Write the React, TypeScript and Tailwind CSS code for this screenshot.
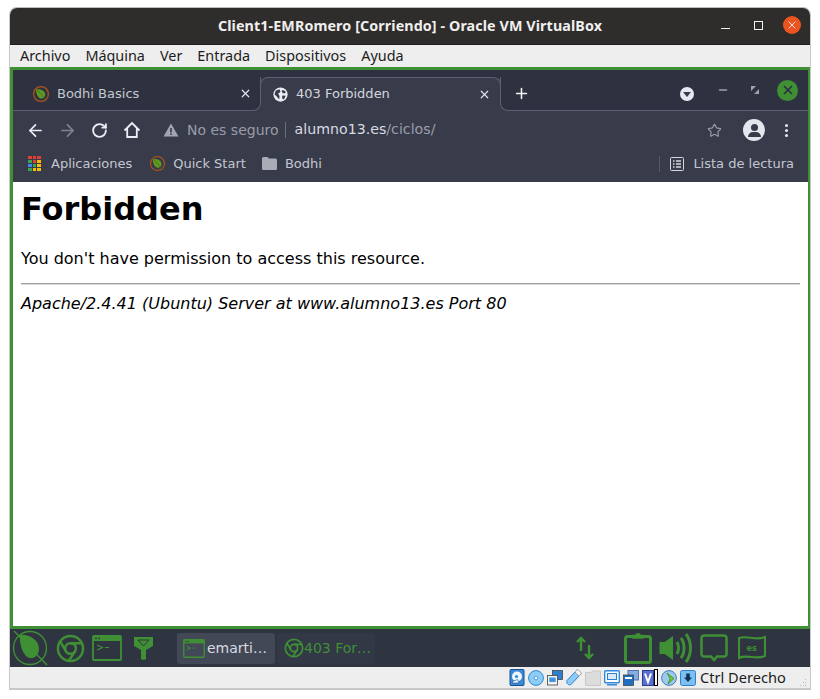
import React from "react";
import { ArrowLeft, ArrowRight, RotateCw, X, Plus, Star, Minus } from "lucide-react";

const G = "#3f8f35";
const UI = "font-['DejaVu_Sans',sans-serif]";

function Leaf({ size = 18 }: { size?: number }) {
  return (
    <svg width={size} height={size} viewBox="0 0 18 18" className="shrink-0">
      <circle cx="9" cy="9" r="7.4" fill="none" stroke="#b5521b" strokeWidth="1.2" />
      <path d="M4 4.5C7 3.8 13 5 13.2 9.5C13.3 12 11 13.8 9 13.6C6 13.3 3.8 8 4 4.5Z" fill="#5f9a1f" />
      <path d="M4 4L15.5 16" stroke="#3f6a25" strokeWidth="0.8" />
    </svg>
  );
}

function ChromeGlyph({ size, stroke = 2 }: { size: number; stroke?: number }) {
  return (
    <svg width={size} height={size} viewBox="0 0 30 30" className="shrink-0" fill="none" stroke={G} strokeWidth={stroke + 0.6}>
      <circle cx="15" cy="15" r="13" />
      <circle cx="15" cy="15" r="5.5" />
      <path d="M15 9.5H27M10.2 17.8L4 7M19.8 17.8L13 28" />
    </svg>
  );
}

function TermGlyph({ w, h }: { w: number; h: number }) {
  return (
    <svg width={w} height={h} viewBox="0 0 30 26" className="shrink-0" fill="none">
      <rect x="1" y="1" width="28" height="24" rx="1" stroke={G} strokeWidth="1.8" />
      <rect x="1" y="1" width="28" height="5" fill={G} />
      <circle cx="4" cy="3.4" r="0.9" fill="#2e3440" />
      <circle cx="7.2" cy="3.4" r="0.9" fill="#2e3440" />
      <path d="M5 10L10.5 12.5L5 15M13 12.5H17" stroke={G} strokeWidth="1.2" />
    </svg>
  );
}

function TrayIcon({ kind }: { kind: number }) {
  const base = "shrink-0";
  if (kind === 0)
    return (
      <svg width="16" height="17" viewBox="0 0 16 17" className={base}>
        <rect x="1" y="0.5" width="14" height="16" rx="1" fill="#3a8ad8" stroke="#17508f" />
        <circle cx="8" cy="7.5" r="5" fill="#eef6ff" />
        <circle cx="7.5" cy="7.5" r="1.6" fill="#3a8ad8" />
        <path d="M3.5 12.5L8.5 10.5L10 14H3.5Z" fill="#eef6ff" stroke="#17508f" strokeWidth="0.6" />
      </svg>
    );
  if (kind === 1)
    return (
      <svg width="16" height="16" viewBox="0 0 16 16" className={base}>
        <circle cx="8" cy="8" r="7.4" fill="#8ccdf8" stroke="#3186cf" />
        <circle cx="8" cy="8" r="1.8" fill="#f0f8ff" stroke="#3186cf" strokeWidth="0.7" />
      </svg>
    );
  if (kind === 2)
    return (
      <svg width="16" height="16" viewBox="0 0 16 16" className={base}>
        <rect x="5.5" y="0.5" width="10" height="9" fill="#2f7fd0" stroke="#444" strokeWidth="0.8" />
        <rect x="0.5" y="5.5" width="10" height="9.5" fill="#f2f2f2" stroke="#444" strokeWidth="0.8" />
        <rect x="2.3" y="7.5" width="6.4" height="4.5" fill="#3f95e0" />
      </svg>
    );
  if (kind === 3)
    return (
      <svg width="16" height="17" viewBox="0 0 16 17" className={base}>
        <path d="M1 11.5L9 3L13 7L5 15.5C3 16.8 -0.2 14.5 1 11.5Z" fill="#8ccdf8" stroke="#2f7fd0" />
        <path d="M10 1.5L12 .5L15.5 4L14.5 6L12.5 6.8L9.2 3.5Z" fill="#f2f4f7" stroke="#8a8a8a" strokeWidth="0.7" />
      </svg>
    );
  if (kind === 4)
    return (
      <svg width="16" height="16" viewBox="0 0 16 16" className={base}>
        <path d="M0.5 2.5H6L7.5 1H15.5V15.5H0.5Z" fill="#dcdcdc" stroke="#c8c8c8" />
      </svg>
    );
  if (kind === 5)
    return (
      <svg width="16" height="16" viewBox="0 0 16 16" className={base}>
        <rect x="0.7" y="0.7" width="14.6" height="12" rx="1" fill="#fff" stroke="#2f8ae0" strokeWidth="1.4" />
        <rect x="3.5" y="3.5" width="9" height="6" fill="#d7ecff" stroke="#2f7fd0" />
        <path d="M3 14.8H13" stroke="#2f7fd0" strokeWidth="1.4" />
      </svg>
    );
  if (kind === 6)
    return (
      <svg width="16" height="16" viewBox="0 0 16 16" className={base}>
        <rect x="5" y="0.5" width="10.5" height="9.5" fill="#86ade2" stroke="#3a5f9c" strokeWidth="0.8" />
        <rect x="0.5" y="5" width="10" height="10.5" fill="#1c6fc4" stroke="#444" strokeWidth="0.8" />
        <rect x="2" y="7" width="7" height="2" fill="#fff" />
      </svg>
    );
  if (kind === 7)
    return (
      <div className="flex items-center shrink-0">
        <svg width="12" height="16" viewBox="0 0 12 16">
          <rect x="0.5" y="0.5" width="11" height="15" fill="#5a6fd0" stroke="#2d3c8f" />
          <path d="M3 3.5L6 12L9 3.5" fill="none" stroke="#fff" strokeWidth="2" />
        </svg>
        <div className="w-[4px] h-[17px] border border-black bg-white" />
      </div>
    );
  if (kind === 8)
    return (
      <svg width="16" height="16" viewBox="0 0 16 16" className={base}>
        <circle cx="8" cy="8" r="7.4" fill="#9cc9ee" stroke="#3f7fb8" />
        <path d="M6 3L13 8.5L7 14L9 8.5Z" fill="#6fc730" stroke="#2f7a12" strokeWidth="0.6" />
      </svg>
    );
  return (
    <svg width="16" height="16" viewBox="0 0 16 16" className={base}>
      <rect x="0.5" y="0.5" width="15" height="15" rx="2" fill="#7cc0f2" stroke="#2f7fd0" />
      <path d="M6.2 3.5H9.8V7.5H12L8 12L4 7.5H6.2Z" fill="#12305a" />
    </svg>
  );
}

export default function App() {
  return (
    <div className="w-[820px] h-[699px] bg-white pt-[7px] pl-[9px] overflow-hidden">
      <div className="w-[802px] h-[683px] flex flex-col rounded-t-[8px] overflow-hidden border-t border-b-2 border-x border-t-[#bdbdbd] border-x-[#c8c8c8] border-b-[#c8c8c8]">
        {/* title bar */}
        <div className="h-[37px] shrink-0 bg-[#2f2c2c] border-b border-[#1f1d1d] relative flex items-center justify-center">
          <span className="font-['Noto_Sans',sans-serif] font-bold text-[14.3px] text-[#f0efee] tracking-[0.1px]">Client1-EMRomero [Corriendo] - Oracle VM VirtualBox</span>
          <div className="absolute right-[9px] top-[8px] flex items-center">
            <div className="w-[9px] h-[1px] bg-[#f2f2f2] mt-[6px] mr-[24px]" />
            <div className="w-[9px] h-[9px] border border-[#f2f2f2] mr-[20px]" />
            <div className="w-[18px] h-[18px] rounded-full bg-[#e95420] flex items-center justify-center">
              <X size={12} color="#fff" strokeWidth={1.6} />
            </div>
          </div>
        </div>
        {/* menu bar */}
        <div className="h-[22px] shrink-0 bg-[#eeeeee] flex items-center pl-[10px] gap-[15px] font-['Noto_Sans',sans-serif] text-[14.4px] text-[#1c1c1c]">
          <span>Archivo</span>
          <span>Máquina</span>
          <span>Ver</span>
          <span>Entrada</span>
          <span>Dispositivos</span>
          <span>Ayuda</span>
        </div>
        {/* guest */}
        <div className="h-[562px] shrink-0 border-t-[3px] border-b-[3px] border-l-[3px] border-r-[2px] border-[#3f8f35] flex flex-col bg-white">
          {/* tab strip */}
          <div className={`h-[41px] shrink-0 bg-[#2e3240] flex flex-col justify-end ${UI} text-[13px]`}>
            <div className="h-[34px] flex bg-[linear-gradient(#2e3240_8px,#383b4a_8px)]">
              <div className="w-[248px] flex items-center pl-[19px] pr-[8px] bg-[#2e3240] border-b border-r border-[#5c6070] rounded-br-[8px]">
                <Leaf />
                <span className="ml-[7px] text-[#c4c7d0] flex-1">Bodhi Basics</span>
                <X size={13} color="#e0e2e8" strokeWidth={2.2} />
              </div>
              <div className="w-[241px] -ml-[1px] self-start h-[26px] bg-[#383b4a] border-t border-x border-[#5c6070] rounded-t-[8px]">
                <div className="h-[32px] flex items-center pl-[12px] pr-[9px]">
                  <svg width="15" height="15" viewBox="0 0 16 16" className="shrink-0">
                    <circle cx="8" cy="8" r="7.6" fill="#eceef4" />
                    <path d="M3 3.6L7 2.4L8 5L5.5 7.2L7 9.6L6.6 13.4L4.4 10.6L1.6 7.6ZM10.4 2.8L13.6 5L13 6.6H10.4L9.2 4.6ZM10 9L13.6 9.4L11.6 13.2L9.6 12Z" fill="#383b4a" />
                  </svg>
                  <span className="ml-[8px] text-[#d4d6de] flex-1">403 Forbidden</span>
                  <X size={13} color="#e0e2e8" strokeWidth={2.2} />
                </div>
              </div>
              <div className="flex-1 -ml-[1px] flex items-center bg-[#2e3240] border-l border-b border-[#5c6070] rounded-bl-[8px] pl-[12px]">
                <Plus size={17} color="#f2f3f7" strokeWidth={2.2} />
                <div className="flex-1" />
                <div className="flex items-center pr-[10px] mt-[-7px]">
                  <div className="w-[14px] h-[14px] rounded-full bg-[#e6e8f2] flex items-center justify-center mt-[8px] mr-[23px]">
                    <div className="w-0 h-0 border-x-[4px] border-x-transparent border-t-[5px] border-t-[#383b4a]" />
                  </div>
                  <Minus size={12} color="#9ea1ae" strokeWidth={3} className="mr-[21px]" />
                  <svg width="10" height="10" viewBox="0 0 10 10" className="mr-[17px]">
                    <path d="M1 1H6L1 6ZM9 9H4L9 4Z" fill="#9ea1ae" />
                  </svg>
                  <div className="w-[21px] h-[21px] rounded-full bg-[#3f8f35] flex items-center justify-center">
                    <X size={14} color="#2e3240" strokeWidth={3} />
                  </div>
                </div>
              </div>
            </div>
          </div>
          {/* toolbar */}
          <div className={`h-[38px] shrink-0 bg-[#383b4a] flex items-center pl-[13px] pr-[20px] ${UI}`}>
            <ArrowLeft size={19} color="#eceef4" strokeWidth={2.2} className="shrink-0" />
            <ArrowRight size={19} color="#80838f" strokeWidth={2.2} className="ml-[13px] shrink-0" />
            <RotateCw size={17} color="#eceef4" strokeWidth={2.6} className="ml-[14px] shrink-0" />
            <svg width="18" height="18" viewBox="0 0 18 18" className="ml-[15px] shrink-0" fill="none" stroke="#eceef4" strokeWidth="1.8">
              <path d="M1.5 9.5L9 2L16.5 9.5M4.2 7.5V16H13.8V7.5" />
            </svg>
            <svg width="16" height="14" viewBox="0 0 16 14" className="ml-[22px] shrink-0">
              <path d="M8 0.5L15.5 13.5H0.5Z" fill="#a2a5b0" />
              <path d="M7.2 5H8.8V9.5H7.2ZM7.2 10.5H8.8V12H7.2Z" fill="#383b4a" />
            </svg>
            <span className="ml-[8px] text-[14px] text-[#9a9da9]">No es seguro</span>
            <div className="w-[1px] h-[16px] bg-[#6b6e7b] ml-[6px] mr-[9px]" />
            <span className="text-[14.2px] text-[#d8dae2]">alumno13.es</span>
            <span className="text-[14.2px] text-[#9a9da9]">/ciclos/</span>
            <div className="flex-1" />
            <Star size={15} color="#9a9da9" strokeWidth={1.8} className="shrink-0" />
            <div className="ml-[21px] w-[22px] h-[22px] rounded-full bg-[#e4e6ee] flex flex-col items-center justify-center shrink-0">
              <div className="w-[7px] h-[7px] rounded-full bg-[#383b4a]" />
              <div className="w-[13px] h-[5px] rounded-t-[5px] bg-[#383b4a] mt-[1px]" />
            </div>
            <div className="ml-[20px] flex flex-col gap-[2px] shrink-0">
              <div className="w-[3px] h-[3px] rounded-full bg-[#e4e6ee]" />
              <div className="w-[3px] h-[3px] rounded-full bg-[#e4e6ee]" />
              <div className="w-[3px] h-[3px] rounded-full bg-[#e4e6ee]" />
            </div>
          </div>
          {/* bookmarks */}
          <div className={`h-[33px] shrink-0 bg-[#383b4a] flex items-center pl-[15px] pr-[14px] pb-[4px] ${UI} text-[13px] text-[#c4c7d0]`}>
            <div className="grid grid-cols-3 gap-[1px] w-[13px] shrink-0">
              {["#e04030","#e04030","#e04030","#35a853","#e04030","#fbbc05","#4285f4","#35a853","#fbbc05","#35a853","#fbbc05","#fbbc05"].map((c, i) => (
                <div key={i} className="h-[3px]" style={{ background: c }} />
              ))}
            </div>
            <span className="ml-[10px]">Aplicaciones</span>
            <div className="ml-[17px]"><Leaf size={17} /></div>
            <span className="ml-[7px]">Quick Start</span>
            <svg width="15" height="13" viewBox="0 0 15 13" className="ml-[16px] shrink-0">
              <path d="M0 1.5A1.5 1.5 0 0 1 1.5 0H5.5L7 1.5H13.5A1.5 1.5 0 0 1 15 3V11.5A1.5 1.5 0 0 1 13.5 13H1.5A1.5 1.5 0 0 1 0 11.5Z" fill="#a9acb6" />
            </svg>
            <span className="ml-[8px]">Bodhi</span>
            <div className="flex-1" />
            <div className="w-[1px] h-[16px] bg-[#555866] mr-[10px]" />
            <svg width="14" height="14" viewBox="0 0 14 14" className="shrink-0" fill="none" stroke="#d4d6de">
              <rect x="0.5" y="0.5" width="13" height="13" rx="1" />
              <path d="M3 4H4.5M6 4H11M3 7H4.5M6 7H11M3 10H4.5M6 10H11" strokeWidth="1.3" />
            </svg>
            <span className="ml-[9px]">Lista de lectura</span>
          </div>
          {/* page */}
          <div className="flex-1 bg-white px-[8px] font-['DejaVu_Sans',sans-serif] text-black">
            <h1 className="font-bold text-[32px] leading-[38px] mt-[8px]">Forbidden</h1>
            <p className="text-[16px] leading-[19px] mt-[21px]">You don't have permission to access this resource.</p>
            <div className="h-[2px] bg-[#a0a0a0] border-b border-[#d8d8d8] mt-[15px]" />
            <div className="italic text-[16px] leading-[19px] mt-[9px]">Apache/2.4.41 (Ubuntu) Server at www.alumno13.es Port 80</div>
          </div>
        </div>
        {/* panel */}
        <div className="h-[38px] shrink-0 bg-[#2e3440] flex items-center">
          <svg width="38" height="38" viewBox="0 0 38 38" className="ml-[1px] shrink-0">
            <circle cx="19" cy="19" r="16.5" fill="none" stroke={G} strokeWidth="1.4" />
            <path d="M9 6C17 5 28 10 28 20C28 26 23 30 19 29C12 28 8 14 9 6Z" fill={G} />
            <path d="M3 2L36 36" stroke={G} strokeWidth="1.4" />
          </svg>
          <div className="ml-[7px]"><ChromeGlyph size={29} /></div>
          <div className="ml-[7px]"><TermGlyph w={30} h={26} /></div>
          <svg width="21" height="23" viewBox="0 0 21 23" className="ml-[11px] shrink-0">
            <path d="M1 0H20V9L13 13V22C13 23 8 23 8 22V13L1 9Z" fill={G} />
            <path d="M5 3H16L10.5 9Z" fill="none" stroke="#2e3440" strokeWidth="1" />
          </svg>
          <div className="ml-[23px] w-[98px] h-[31px] rounded-[3px] bg-[#434857] flex items-center pl-[6px] gap-[2px] font-['DejaVu_Sans',sans-serif] text-[14px] text-[#d8dae0]">
            <TermGlyph w={22} h={19} />
            <span>emarti…</span>
          </div>
          <div className="ml-[2px] w-[98px] h-[31px] rounded-[3px] bg-[#323845] flex items-center pl-[7px] font-['DejaVu_Sans',sans-serif] text-[14px] text-[#3f8f35]">
            <ChromeGlyph size={20} />
            <span>403 For…</span>
          </div>
          <svg width="19" height="24" viewBox="0 0 19 24" className="ml-[201px] shrink-0" fill="none" stroke={G} strokeWidth="2.4">
            <path d="M5 15V2M1 6L5 2L9 6M13 9V22M9 18L13 22L17 18" />
          </svg>
          <svg width="28" height="32" viewBox="0 0 28 32" className="ml-[29px] shrink-0" fill="none" stroke={G} strokeWidth="3">
            <rect x="1.5" y="4.5" width="25" height="26" rx="2" />
            <path d="M9 6H19V3.5H16C16 1 12 1 12 3.5H9Z" fill={G} strokeWidth="1.5" />
          </svg>
          <svg width="34" height="30" viewBox="0 0 34 30" className="ml-[7px] shrink-0" fill="none" stroke={G} strokeWidth="3">
            <path d="M1.5 10H6L13 5V25L6 20H1.5Z" fill={G} strokeWidth="2" />
            <path d="M18 9C20 12 20 18 18 21M22 5C26 10 26 20 22 25M27 1C33 9 33 21 27 29" />
          </svg>
          <svg width="28" height="28" viewBox="0 0 28 28" className="ml-[7px] shrink-0" fill="none" stroke={G} strokeWidth="2.6">
            <path d="M4 1.5H24A2.5 2.5 0 0 1 26.5 4V20A2.5 2.5 0 0 1 24 22.5H17L14 26L11 22.5H4A2.5 2.5 0 0 1 1.5 20V4A2.5 2.5 0 0 1 4 1.5Z" />
          </svg>
          <svg width="28" height="26" viewBox="0 0 28 26" className="ml-[10px] shrink-0" fill="none" stroke={G} strokeWidth="2.2">
            <path d="M1 3C9 0 18 6 27 2V21C18 25 9 19 1 23Z" />
            <text x="8.5" y="16" fontSize="8" fontWeight="700" fill={G} stroke="none" fontFamily="DejaVu Sans">es</text>
          </svg>
        </div>
        {/* status bar */}
        <div className="flex-1 bg-[#eeeeee] flex items-center pl-[499px] gap-[3px] pr-[2px]">
          {[0,1,2,3,4,5,6,7,8,9].map((k) => <TrayIcon key={k} kind={k} />)}
          <span className="ml-[1px] font-['Noto_Sans',sans-serif] text-[14.6px] text-[#1c1c1c]">Ctrl Derecho</span>
          <div className="flex-1" />
          <svg width="9" height="10" viewBox="0 0 9 10" className="self-end mb-[1px] shrink-0" fill="#bdbdbd">
            <rect x="6" y="1" width="1" height="1" />
            <rect x="4" y="4" width="1" height="1" />
            <rect x="6" y="4" width="1" height="1" />
            <rect x="1" y="7" width="1" height="1" />
            <rect x="4" y="7" width="1" height="1" />
            <rect x="6" y="7" width="1" height="1" />
          </svg>
        </div>
      </div>
    </div>
  );
}
